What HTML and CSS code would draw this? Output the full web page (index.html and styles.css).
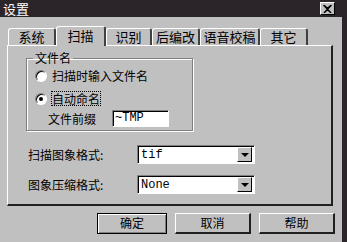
FILE: index.html
```html
<!DOCTYPE html>
<html>
<head>
<meta charset="utf-8">
<link rel="stylesheet" href="styles.css">
</head>
<body>
<div class="window">
  <div class="titlebar">
    <span class="title">设置</span>
    <span class="close">
      <svg width="9" height="8" viewBox="0 0 9 8"><path d="M1 0 L4.5 3.5 L8 0 M1 8 L4.5 4.5 L8 8 M0.5 0 L8 8 M8.5 0 L1 8" stroke="#000" stroke-width="1.4" fill="none"/></svg>
    </span>
  </div>
  <div class="tabs">
    <div class="tab w48">系统</div>
    <div class="tab sel w50">扫描</div>
    <div class="tab w46">识别</div>
    <div class="tab w48">后编改</div>
    <div class="tab w60">语音校稿</div>
    <div class="tab w48">其它</div>
  </div>
  <div class="panel">
    <fieldset class="group">
      <legend>文件名</legend>
      <div class="radio-row"><span class="radio"></span><span>扫描时输入文件名</span></div>
      <div class="radio-row"><span class="radio on"></span><span class="focus">自动命名</span></div>
      <div class="prefix-row"><span>文件前缀</span><span class="input">~TMP</span></div>
    </fieldset>
    <div class="form">
      <div class="form-row"><span class="label">扫描图象格式:</span><span class="combo"><span class="val">tif</span><span class="drop"><i></i></span></span></div>
      <div class="form-row"><span class="label">图象压缩格式:</span><span class="combo"><span class="val">None</span><span class="drop"><i></i></span></span></div>
    </div>
  </div>
  <div class="buttons">
    <div class="btn b1">确定</div>
    <div class="btn b2">取消</div>
    <div class="btn b3">帮助</div>
  </div>
</div>
</body>
</html>
```
FILE: styles.css
```css
html, body {
  margin: 0;
  padding: 0;
}
body {
  width: 347px;
  height: 242px;
  overflow: hidden;
  background: #c0c0c0;
  font-family: "Noto Sans CJK SC", "Noto Sans", sans-serif;
  font-size: 12px;
  color: #000;
}
.window {
  width: 342px;
  height: 242px;
  border-right: 5px solid #2b2529;
  box-sizing: content-box;
  display: flex;
  flex-direction: column;
}
.titlebar {
  height: 17px;
  background: #2b2529;
  display: flex;
  align-items: center;
  padding: 0 7px 0 3px;
}
.title {
  color: #fff;
  font-size: 13px;
  line-height: 17px;
}
.close {
  margin-left: auto;
  width: 13px;
  height: 11px;
  background: #c0c0c0;
  border-top: 1px solid #fff;
  border-left: 1px solid #fff;
  border-right: 1px solid #000;
  border-bottom: 1px solid #000;
  display: flex;
  align-items: center;
  justify-content: center;
}
.tabs {
  display: flex;
  align-items: flex-end;
  padding: 9px 0 0 8px;
  height: 19px;
  position: relative;
  z-index: 1;
}
.tab {
  box-sizing: border-box;
  height: 17px;
  border-top: 1px solid #fff;
  border-left: 1px solid #fff;
  border-right: 2px solid #404040;
  border-radius: 3px 3px 0 0;
  text-align: center;
  font-size: 13px;
  line-height: 16px;
  background: #c0c0c0;
}
.tab.sel {
  height: 20px;
  margin-bottom: -1px;
  line-height: 18px;
}
.w48 { width: 48px; }
.w50 { width: 50px; }
.w46 { width: 46px; }
.w60 { width: 60px; }
.panel {
  margin-left: 7px;
  width: 326px;
  height: 161px;
  box-sizing: border-box;
  border-top: 1px solid #fff;
  border-left: 1px solid #fff;
  border-right: 2px solid #202020;
  border-bottom: 2px solid #202020;
  padding: 6px 0 0 18px;
}
.group {
  margin: 0;
  width: 167px;
  height: 79px;
  box-sizing: border-box;
  border: 1px solid #808080;
  box-shadow: 1px 1px 0 #fff, inset 1px 1px 0 #fff;
  padding: 4px 0 0 8px;
}
.group legend {
  padding: 0 2px;
  margin-left: -2px;
  font-size: 12px;
  line-height: 12px;
}
.radio-row {
  display: flex;
  align-items: center;
  gap: 5px;
  height: 23px;
  margin-top: -4px;
}
.radio-row + .radio-row {
  margin-top: 0;
}
.radio {
  width: 12px;
  height: 12px;
  box-sizing: border-box;
  border-radius: 50%;
  background: #fff;
  border: 1px solid;
  border-color: #808080 #fff #fff #808080;
  box-shadow: inset 1px 1px 0 #000;
  display: flex;
  align-items: center;
  justify-content: center;
}
.radio.on::after {
  content: "";
  width: 4px;
  height: 4px;
  border-radius: 50%;
  background: #000;
}
.focus {
  outline: 1px dotted #000;
  outline-offset: 0;
  line-height: 13px;
}
.prefix-row {
  display: flex;
  align-items: center;
  gap: 16px;
  padding-left: 13px;
  margin-top: 0;
}
.input {
  width: 57px;
  height: 17px;
  box-sizing: border-box;
  background: #fff;
  border: 1px solid;
  border-color: #808080 #fff #fff #808080;
  box-shadow: inset 1px 1px 0 #000;
  font-family: "Liberation Mono", monospace;
  font-size: 12px;
  line-height: 15px;
  padding-left: 2px;
}
.form {
  margin-top: 14px;
  display: flex;
  flex-direction: column;
  gap: 11px;
}
.form-row {
  display: flex;
  align-items: center;
  height: 19px;
}
.label {
  width: 109px;
  padding-left: 2px;
  font-size: 12px;
}
.combo {
  width: 118px;
  height: 19px;
  box-sizing: border-box;
  background: #fff;
  border: 1px solid;
  border-color: #808080 #fff #fff #808080;
  box-shadow: inset 1px 1px 0 #000;
  display: flex;
  align-items: center;
  padding: 1px 2px 1px 3px;
}
.val {
  font-family: "Liberation Mono", monospace;
  font-size: 12px;
  flex: 1;
}
.drop {
  width: 15px;
  height: 15px;
  box-sizing: border-box;
  background: #c0c0c0;
  border-top: 1px solid #fff;
  border-left: 1px solid #fff;
  border-right: 1px solid #000;
  border-bottom: 1px solid #000;
  display: flex;
  align-items: center;
  justify-content: center;
}
.drop i {
  width: 0;
  height: 0;
  border-left: 4px solid transparent;
  border-right: 4px solid transparent;
  border-top: 4px solid #000;
}
.buttons {
  display: flex;
  padding: 7px 0 0 97px;
  gap: 8px;
}
.btn {
  height: 21px;
  box-sizing: border-box;
  border-top: 1px solid #fff;
  border-left: 1px solid #fff;
  border-right: 2px solid #202020;
  border-bottom: 2px solid #202020;
  text-align: center;
  line-height: 18px;
  font-size: 12px;
}
.b1 { width: 70px; border: 1px solid #000; box-shadow: inset 1px 1px 0 #fff, inset -1px -1px 0 #808080; }
.b2 { width: 76px; }
.b3 { width: 76px; }
```
